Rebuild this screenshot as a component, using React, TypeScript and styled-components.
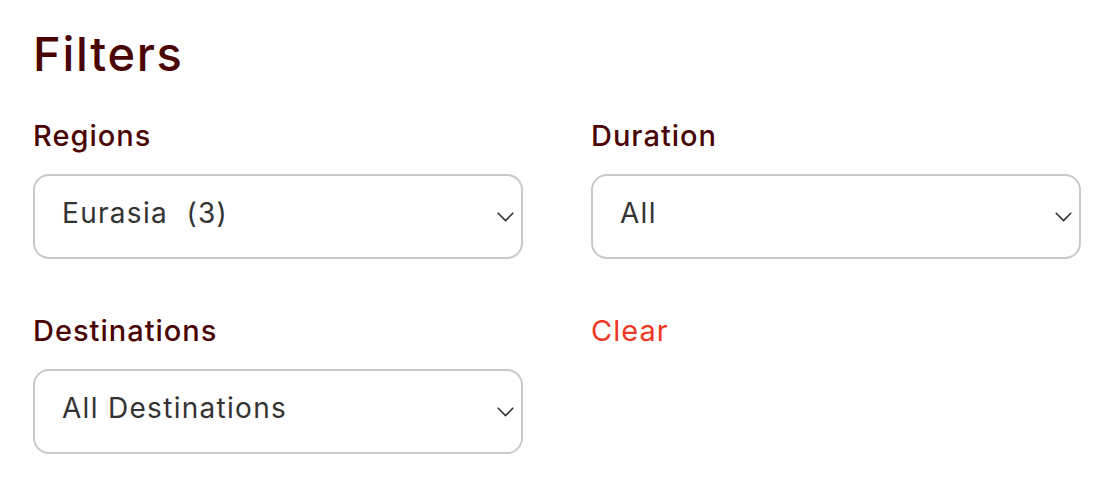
import React from "react";
import styled, { createGlobalStyle } from "styled-components";

const Global = createGlobalStyle`
  html, body { margin: 0; padding: 0; background: #ffffff; }
  body { font-family: Inter, "Noto Sans", "Liberation Sans", sans-serif; }
`;

const Panel = styled.section`
  padding: 25px 33px 0 33px;
`;

const Title = styled.h1`
  margin: 0 0 36px 0;
  font-size: 47px;
  font-weight: 500;
  line-height: 57px;
  color: #4a0404;
  letter-spacing: 1.7px;
`;

const Grid = styled.div`
  display: grid;
  grid-template-columns: 490px 490px;
  column-gap: 68px;
  row-gap: 54px;
`;

const Field = styled.div`
  display: flex;
  flex-direction: column;
  gap: 21px;
`;

const Label = styled.label`
  font-size: 29px;
  font-weight: 500;
  line-height: 35px;
  color: #4a0404;
  letter-spacing: 1px;
`;

const ClearLink = styled.a`
  font-size: 29px;
  font-weight: 400;
  line-height: 35px;
  color: #ee3726;
  letter-spacing: 1px;
  cursor: pointer;
  text-decoration: none;
`;

const SelectBox = styled.div`
  box-sizing: border-box;
  height: 85px;
  border: 2px solid #c9c9cc;
  border-radius: 16px;
  display: flex;
  align-items: center;
  padding: 0 7px 0 27px;
  background: #fff;
`;

const Value = styled.span`
  flex: 1;
  margin-bottom: 8px;
  font-size: 28px;
  line-height: 34px;
  color: #333333;
  letter-spacing: 1.3px;
  white-space: pre;
`;

const ChevronIcon = styled.svg`
  flex: none;
  margin-top: 1px;
`;

const Chevron = () => (
  <ChevronIcon width="17" height="10" viewBox="0 0 17 10" fill="none">
    <path d="M1.2 1.2 L8.5 8.6 L15.8 1.2" stroke="#333" strokeWidth="1.6" strokeLinecap="round" strokeLinejoin="round" />
  </ChevronIcon>
);

const Select = ({ value }: { value: string }) => (
  <SelectBox>
    <Value>{value}</Value>
    <Chevron />
  </SelectBox>
);

export default function App() {
  return (
    <>
      <Global />
      <Panel>
        <Title>Filters</Title>
        <Grid>
          <Field>
            <Label>Regions</Label>
            <Select value="Eurasia  (3)" />
          </Field>
          <Field>
            <Label>Duration</Label>
            <Select value="All" />
          </Field>
          <Field>
            <Label>Destinations</Label>
            <Select value="All Destinations" />
          </Field>
          <Field>
            <ClearLink>Clear</ClearLink>
          </Field>
        </Grid>
      </Panel>
    </>
  );
}
